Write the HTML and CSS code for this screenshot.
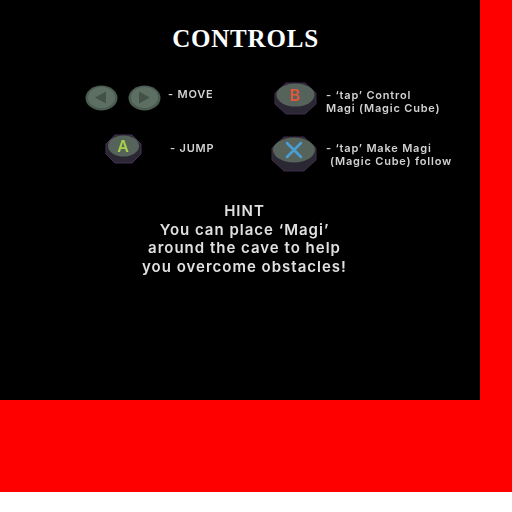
FILE: index.html
```html
<!DOCTYPE html>
<html lang="en">
<head>
  <meta charset="UTF-8" />
  <title>Controls</title>
  <link rel="stylesheet" href="styles.css">
</head>
<body>
  <div class="frame">
    <div class="screen">
      <h1 class="title">CONTROLS</h1>

      <div class="controls">
        <div class="control control-move">
          <svg class="icon" width="33" height="26" viewBox="0 0 33 26">
            <ellipse cx="16.500" cy="13" rx="16" ry="12.500" fill="#4a5b50"/>
            <ellipse cx="16.500" cy="12.500" rx="13.500" ry="10.500" fill="#5d6f63"/>
            <path d="M10 12.500 L21 6.500 V18.500 Z" fill="#445148"/>
          </svg>
          <svg class="icon icon-right" width="33" height="26" viewBox="0 0 33 26">
            <ellipse cx="16.500" cy="13" rx="16" ry="12.500" fill="#4a5b50"/>
            <ellipse cx="16.500" cy="12.500" rx="13.500" ry="10.500" fill="#5d6f63"/>
            <path d="M22 12.500 L11 6.500 V18.500 Z" fill="#445148"/>
          </svg>
          <span class="label">- MOVE</span>
        </div>

        <div class="control control-b">
          <svg class="icon" width="43" height="33" viewBox="0 0 43 33">
            <path d="M12 1 H31 L42 11 V22 L31 32 H12 L1 22 V11 Z" fill="#2b2733" stroke="#3f2c4a"/>
            <ellipse cx="21.500" cy="13" rx="19" ry="11.500" fill="#56635a"/>
            <text class="key key-b" x="21.500" y="19">B</text>
          </svg>
          <span class="label">- ‘tap’ Control<br>Magi (Magic Cube)</span>
        </div>

        <div class="control control-a">
          <svg class="icon" width="37" height="30" viewBox="0 0 37 30">
            <path d="M10 1 H27 L36 10 V20 L27 29 H10 L1 20 V10 Z" fill="#2b2733" stroke="#47305a"/>
            <ellipse cx="18.500" cy="12" rx="15.500" ry="10.500" fill="#56635a"/>
            <text class="key key-a" x="18.500" y="18">A</text>
          </svg>
          <span class="label">- JUMP</span>
        </div>

        <div class="control control-x">
          <svg class="icon" width="46" height="36" viewBox="0 0 46 36">
            <path d="M13 1 H33 L45 12 V24 L33 35 H13 L1 24 V12 Z" fill="#2b2733" stroke="#3f2c4a"/>
            <ellipse cx="23" cy="14" rx="21" ry="12.500" fill="#56635a"/>
            <path d="M16 7 L30 21 M30 7 L16 21" stroke="#4b9fd8" stroke-width="2.500" stroke-linecap="round"/>
          </svg>
          <span class="label">- ‘tap’ Make Magi<br><span class="indent">(Magic Cube) follow</span></span>
        </div>
      </div>

      <div class="hint">
        HINT<br>
        You can place ‘Magi’<br>
        around the cave to help<br>
        you overcome obstacles!
      </div>
    </div>
  </div>
</body>
</html>
```

FILE: styles.css
```css
body {
  margin: 0;
  background-color: white;
}

.frame {
  width: 512px;
  height: 492px;
  background-color: #ff0000;
}

.screen {
  width: 480px;
  height: 400px;
  background-color: black;
  overflow: hidden;
}

.title {
  margin: 0;
  padding: 22px 0 0 11px;
  text-align: center;
  font-family: "Liberation Serif", serif;
  font-size: 25px;
  line-height: 34px;
  font-weight: bold;
  letter-spacing: 0.8px;
  color: white;
}

.controls {
  display: grid;
  grid-template-columns: 271px 209px;
  grid-template-rows: 54px 40px;
  margin-top: 24px;
}

.control {
  display: flex;
  align-items: flex-start;
  font-family: Inter, sans-serif;
  font-size: 11px;
  font-weight: 600;
  line-height: 13px;
  letter-spacing: 0.8px;
  color: #d2d2d2;
}

.icon {
  flex: none;
  filter: blur(0.6px);
}

.label {
  filter: blur(0.5px);
}

.key {
  font-family: Inter, sans-serif;
  font-weight: 600;
  font-size: 16px;
  text-anchor: middle;
}

.key-a { fill: #a8d04a; }
.key-b { fill: #e8573a; }

.control-move {
  padding: 5px 0 0 85px;
}

.icon-right {
  margin-left: 10px;
}

.control-move .label {
  margin: 3px 0 0 7px;
}

.control-b {
  padding: 2px 0 0 3px;
}

.control-b .label {
  margin: 7px 0 0 9px;
}

.control-a {
  padding: 0 0 0 105px;
}

.control-a .label {
  margin: 8px 0 0 28px;
}

.control-x {
  padding: 2px 0 0 0;
}

.control-x .label {
  margin: 6px 0 0 9px;
}

.indent {
  margin-left: 4px;
}

.hint {
  margin-top: 28px;
  padding-left: 9px;
  text-align: center;
  font-family: Inter, sans-serif;
  font-size: 15px;
  font-weight: 600;
  line-height: 18.500px;
  letter-spacing: 1px;
  color: #e0e0e0;
  filter: blur(0.5px);
}
```
